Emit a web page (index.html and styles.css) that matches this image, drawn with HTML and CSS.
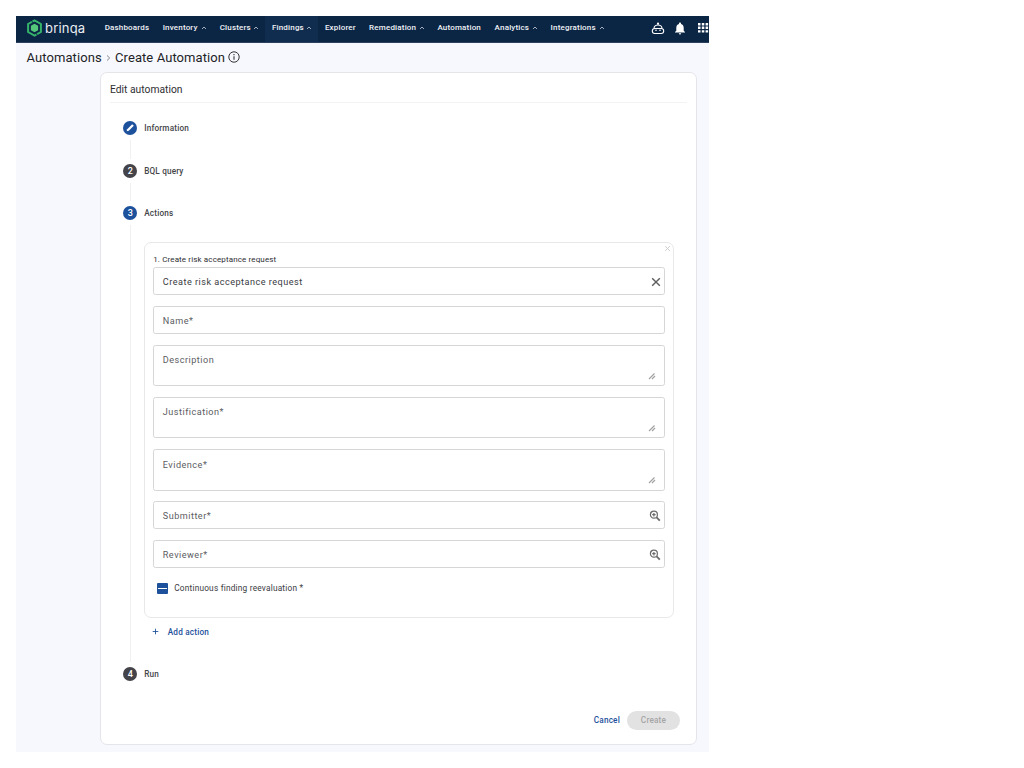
FILE: index.html
```html
<!DOCTYPE html>
<html lang="en">
<head>
    <meta charset="UTF-8">
    <meta name="viewport" content="width=device-width, initial-scale=1.0">
    <title>Create Automation</title>
    <link rel="stylesheet" href="styles.css">
</head>
<body>
    <div class="app">
        <header class="navbar">
            <div class="logo">
                <svg class="logo-mark" viewBox="0 0 16 18">
                    <path d="M8 1.4 14.4 5v8L8 16.6 1.6 13V5z" fill="none" stroke="#36b36b" stroke-width="2"/>
                    <path d="M8 4.8 11.6 6.8v4.4L8 13.2 4.4 11.2V6.8z" fill="#55c77b"/>
                    <path d="M4.2 0 6.5 4M11.8 18 9.5 14" stroke="#0b2545" stroke-width=".8"/>
                </svg>
                <span class="logo-text">brinqa</span>
            </div>
            <nav class="menu">
                <a class="menu-item dashboards">Dashboards</a>
                <a class="menu-item inventory">Inventory <svg class="caret" viewBox="0 0 6 4"><path d="M1 3 3 1 5 3"/></svg></a>
                <a class="menu-item clusters">Clusters <svg class="caret" viewBox="0 0 6 4"><path d="M1 3 3 1 5 3"/></svg></a>
                <a class="menu-item findings active">Findings <svg class="caret" viewBox="0 0 6 4"><path d="M1 3 3 1 5 3"/></svg></a>
                <a class="menu-item explorer">Explorer</a>
                <a class="menu-item remediation">Remediation <svg class="caret" viewBox="0 0 6 4"><path d="M1 3 3 1 5 3"/></svg></a>
                <a class="menu-item automation">Automation</a>
                <a class="menu-item analytics">Analytics <svg class="caret" viewBox="0 0 6 4"><path d="M1 3 3 1 5 3"/></svg></a>
                <a class="menu-item integrations">Integrations <svg class="caret" viewBox="0 0 6 4"><path d="M1 3 3 1 5 3"/></svg></a>
            </nav>
            <div class="tools">
                <svg class="icon-bot" viewBox="0 0 14 13">
                    <path d="M3 6.5a4 3.5 0 0 1 8 0M7 3.5V1.8" fill="none" stroke="#fff" stroke-width="1.1"/>
                    <rect x="1.3" y="6.5" width="11.4" height="5" rx="2.5" fill="none" stroke="#fff" stroke-width="1.1"/>
                    <circle cx="7" cy="1.5" r="1.1" fill="#fff"/>
                    <circle cx="5" cy="8.3" r=".8" fill="#fff"/>
                    <circle cx="9" cy="8.3" r=".8" fill="#fff"/>
                </svg>
                <svg class="icon-bell" viewBox="0 0 12 13">
                    <path d="M6 .6c.6 0 1 .4 1 1v.4c1.700.5 2.700 1.900 2.700 3.700v3l1.300 1.300v.6H1V10l1.300-1.300v-3C2.300 3.900 3.300 2.500 5 2v-.4c0-.6.4-1 1-1zM4.800 11.200h2.400a1.200 1.200 0 0 1-2.400 0z" fill="#fff"/>
                </svg>
                <svg class="icon-apps" viewBox="0 0 11 10">
                    <path d="M0 0h2.500v2.400H0zM3.800 0h2.500v2.400H3.800zM7.600 0h2.500v2.400H7.600zM0 3.600h2.500V6H0zM3.800 3.600h2.500V6H3.800zM7.600 3.600h2.500V6H7.600zM0 7.200h2.500v2.400H0zM3.800 7.200h2.500v2.400H3.800zM7.600 7.200h2.500v2.400H7.600z" fill="#fff"/>
                </svg>
            </div>
        </header>

        <div class="breadcrumb">
            <span class="crumb-root">Automations</span>
            <svg class="crumb-sep" viewBox="0 0 5 8"><path d="M1 1.5 3.7 4 1 6.5" fill="none" stroke="#85878c"/></svg>
            <span class="crumb-page">Create Automation</span>
            <svg class="icon-info" viewBox="0 0 12 12">
                <circle cx="6" cy="6" r="5.2" fill="none" stroke="#333" stroke-width="1"/>
                <path d="M6 5.3v3.5M6 3.1v1.2" stroke="#333" stroke-width="1.1"/>
            </svg>
        </div>

        <main class="card">
            <h2 class="card-title">Edit automation</h2>

            <div class="step">
                <div class="step-rail">
                    <span class="badge blue"><svg viewBox="0 0 14 14"><path d="M3.700 10.300 4.200 8.200 9.200 3.200 10.800 4.800 5.800 9.800z" fill="#fff"/></svg></span>
                </div>
                <div class="step-label">Information</div>
            </div>
            <div class="step">
                <div class="step-rail"><span class="badge">2</span></div>
                <div class="step-label">BQL query</div>
            </div>
            <div class="step step-open">
                <div class="step-rail"><span class="badge blue">3</span></div>
                <div class="step-body">
                    <div class="step-label">Actions</div>
                    <section class="panel">
                        <div class="panel-head">
                            <span class="panel-title">1. Create risk acceptance request</span>
                            <svg class="panel-close" viewBox="0 0 8 8"><path d="M1.3 1.3 6.7 6.7M6.7 1.3 1.3 6.7" stroke="#c8c8c8"/></svg>
                        </div>
                        <div class="field filled">
                            <span>Create risk acceptance request</span>
                            <svg class="clear" viewBox="0 0 10 10"><path d="M1.2 1.2 8.8 8.8M8.8 1.2 1.2 8.8" stroke="#5c5c5c" stroke-width="1.4"/></svg>
                        </div>
                        <div class="field"><span>Name*</span></div>
                        <div class="field area">
                            <span>Description</span>
                            <svg class="grip" viewBox="0 0 8 8"><path d="M1 7 6.5 1.5M4 7 7 4"/></svg>
                        </div>
                        <div class="field area">
                            <span>Justification*</span>
                            <svg class="grip" viewBox="0 0 8 8"><path d="M1 7 6.5 1.5M4 7 7 4"/></svg>
                        </div>
                        <div class="field area">
                            <span>Evidence*</span>
                            <svg class="grip" viewBox="0 0 8 8"><path d="M1 7 6.5 1.5M4 7 7 4"/></svg>
                        </div>
                        <div class="field">
                            <span>Submitter*</span>
                            <svg class="search" viewBox="0 0 12 12"><circle cx="4.9" cy="4.7" r="3.5"/><path class="handle" d="M7.6 7.4 10.8 10.6"/><path d="M3.2 4.7h3.4M4.9 3v3.4"/></svg>
                        </div>
                        <div class="field">
                            <span>Reviewer*</span>
                            <svg class="search" viewBox="0 0 12 12"><circle cx="4.9" cy="4.7" r="3.5"/><path class="handle" d="M7.6 7.4 10.8 10.6"/><path d="M3.2 4.7h3.4M4.9 3v3.4"/></svg>
                        </div>
                        <div class="check-row">
                            <span class="checkbox"></span>
                            <span class="check-label">Continuous finding reevaluation *</span>
                        </div>
                    </section>
                    <div class="add-action">
                        <svg class="plus" viewBox="0 0 8 8"><path d="M4 .8v6.4M.8 4h6.4" stroke="#1d519c" stroke-width="1"/></svg>
                        <span>Add action</span>
                    </div>
                </div>
            </div>
            <div class="step last">
                <div class="step-rail"><span class="badge">4</span></div>
                <div class="step-label">Run</div>
            </div>

            <div class="buttons">
                <a class="cancel">Cancel</a>
                <button class="create" disabled>Create</button>
            </div>
        </main>
    </div>
</body>
</html>
```
FILE: styles.css
```css
* {
    box-sizing: border-box;
}
body {
    margin: 0;
    padding: 16px;
    background: #fff;
    font-family: Roboto, sans-serif;
    color: #444549;
}
svg {
    display: block;
    flex: none;
}
.app {
    width: 692.5px;
    height: 736px;
    background: #f7f8fd;
    overflow: hidden;
}

/* top bar */
.navbar {
    display: flex;
    height: 27px;
    background: #0b2545;
    border-bottom: 1px solid #2b405d;
}
.logo {
    display: flex;
    align-items: center;
    width: 82.5px;
    padding-left: 10px;
    padding-bottom: 3px;
}
.logo-mark {
    width: 17px;
    height: 18px;
}
.logo-text {
    margin-left: 2px;
    font-family: Inter, sans-serif;
    font-size: 13px;
    font-weight: 400;
    letter-spacing: 0.2px;
    color: #e9edf2;
    line-height: 16px;
}
.menu {
    display: flex;
}
.menu-item {
    display: flex;
    align-items: center;
    justify-content: space-between;
    padding: 0 6.3px 3px 6.6px;
    font-size: 8px;
    font-weight: 500;
    letter-spacing: 0.18px;
    color: #f0f2f5;
    white-space: nowrap;
}
.menu-item.active {
    background: #102d50;
}
.dashboards { width: 58px; }
.inventory { width: 57px; }
.clusters { width: 52.3px; }
.findings { width: 53px; }
.explorer { width: 44.2px; }
.remediation { width: 68.3px; }
.automation { width: 57.2px; }
.analytics { width: 56px; }
.integrations { width: 67.5px; }
.caret {
    width: 6px;
    height: 4px;
}
.caret path {
    fill: none;
    stroke: #b4bfcc;
    stroke-width: .9;
}
.tools {
    display: flex;
    align-items: center;
    padding-bottom: 2px;
    margin-left: 39px;
}
.icon-bot {
    width: 14px;
    height: 13px;
}
.icon-bell {
    width: 12px;
    height: 13px;
    margin-left: 9px;
}
.icon-apps {
    width: 11px;
    height: 10px;
    margin-left: 12px;
}

/* breadcrumb */
.breadcrumb {
    display: flex;
    align-items: center;
    height: 29px;
    padding-left: 10.5px;
    font-size: 13px;
    color: #222327;
}
.crumb-root {
    width: 79px;
    letter-spacing: 0.08px;
}
.crumb-sep {
    width: 5px;
    height: 8px;
}
.crumb-page {
    width: 113px;
    margin-left: 4.5px;
    letter-spacing: 0.08px;
    white-space: nowrap;
}
.icon-info {
    width: 12px;
    height: 12px;
    margin-top: -2px;
}

/* card */
.card {
    width: 597px;
    height: 673px;
    margin-left: 84px;
    padding: 0 9.5px;
    background: #fff;
    border: 1px solid #e5e5e9;
    border-radius: 7px;
}
.card-title {
    height: 30px;
    margin: 0 0 18.4px -0.5px;
    border-bottom: 1px solid #f3f3f5;
    font-size: 10.3px;
    font-weight: 400;
    letter-spacing: 0;
    line-height: 34px;
    color: #2d2e32;
}

/* stepper */
.step {
    display: flex;
    height: 42.3px;
    padding-left: 12.7px;
}
.step-rail {
    display: flex;
    flex-direction: column;
    align-items: center;
    width: 14px;
    margin-right: 7px;
}
.step-rail::after {
    content: "";
    flex: 1;
    width: 1px;
    margin: 5px 0;
    background: #f0f0f1;
}
.step.last .step-rail::after {
    display: none;
}
.badge {
    display: flex;
    align-items: center;
    justify-content: center;
    width: 14px;
    height: 14px;
    border-radius: 50%;
    background: #434349;
    color: #fff;
    font-size: 9px;
    font-weight: 500;
    line-height: 14px;
}
.badge.blue {
    background: #1d519c;
}
.badge svg {
    width: 14px;
    height: 14px;
}
.step-label {
    height: 14px;
    font-size: 8.2px;
    font-weight: 500;
    letter-spacing: 0.17px;
    line-height: 14px;
}
.step-open {
    height: 460.8px;
}
.step-body {
    width: 530px;
}

/* action panel */
.panel {
    height: 375.5px;
    margin-top: 22.2px;
    padding: 0 8.5px 0 8px;
    border: 1px solid #e8e8e9;
    border-radius: 7px;
}
.panel-head {
    display: flex;
    justify-content: space-between;
    height: 23.8px;
}
.panel-title {
    padding-top: 10.4px;
    font-size: 8px;
    letter-spacing: 0.13px;
    line-height: 11px;
    color: #2d2e32;
}
.panel-close {
    width: 7px;
    height: 7px;
    margin: 2px -6px 0 0;
}
.field {
    display: flex;
    align-items: center;
    justify-content: space-between;
    height: 28px;
    margin-bottom: 10.9px;
    padding: 1.4px 3px 0 8.6px;
    border: 1px solid #d6d6d7;
    border-radius: 2.5px;
    font-size: 9.1px;
    letter-spacing: 0.49px;
    line-height: 12px;
    color: #5b5c61;
}
.field.filled {
    color: #3a3b3f;
}
.field.area {
    align-items: flex-start;
    height: 41.5px;
    margin-bottom: 10.7px;
    padding-top: 8.4px;
}
.grip {
    width: 8px;
    height: 8px;
    margin: 17.5px 5px 0 0;
}
.grip path {
    fill: none;
    stroke: #a3a3a3;
    stroke-width: 1.2;
}
.clear {
    width: 10px;
    height: 10px;
}
.search {
    width: 12px;
    height: 12px;
}
.search circle,
.search path {
    fill: none;
    stroke: #6c6c6e;
    stroke-width: 1.2;
}
.search .handle {
    stroke-width: 1.8;
}
.check-row {
    display: flex;
    align-items: center;
    height: 20px;
    margin-top: -1px;
    padding-left: 4px;
}
.checkbox {
    display: flex;
    align-items: center;
    width: 11px;
    height: 11px;
    border-radius: 1px;
    background: #1d519c;
}
.checkbox::after {
    content: "";
    width: 9px;
    height: 1px;
    margin: 0 auto;
    background: #fff;
}
.check-label {
    margin-left: 6px;
    font-size: 8.3px;
    letter-spacing: 0.2px;
    color: #3a3b3f;
}
.add-action {
    display: flex;
    align-items: center;
    height: 28px;
    padding-left: 8px;
    font-size: 8.2px;
    font-weight: 500;
    letter-spacing: 0.2px;
    color: #1d519c;
}
.plus {
    width: 7px;
    height: 7px;
    margin-right: 8.5px;
}

/* footer buttons */
.buttons {
    display: flex;
    align-items: center;
    justify-content: flex-end;
    height: 19px;
    margin-top: 1.8px;
    padding-right: 6.5px;
    font-size: 8.2px;
    font-weight: 500;
    letter-spacing: 0.2px;
}
.cancel {
    margin-right: 7px;
    color: #1d519c;
}
.create {
    width: 53px;
    height: 19px;
    padding: 0;
    border: none;
    border-radius: 10px;
    background: #e2e2e2;
    color: #a5a5a6;
    font: inherit;
    letter-spacing: inherit;
}
```
